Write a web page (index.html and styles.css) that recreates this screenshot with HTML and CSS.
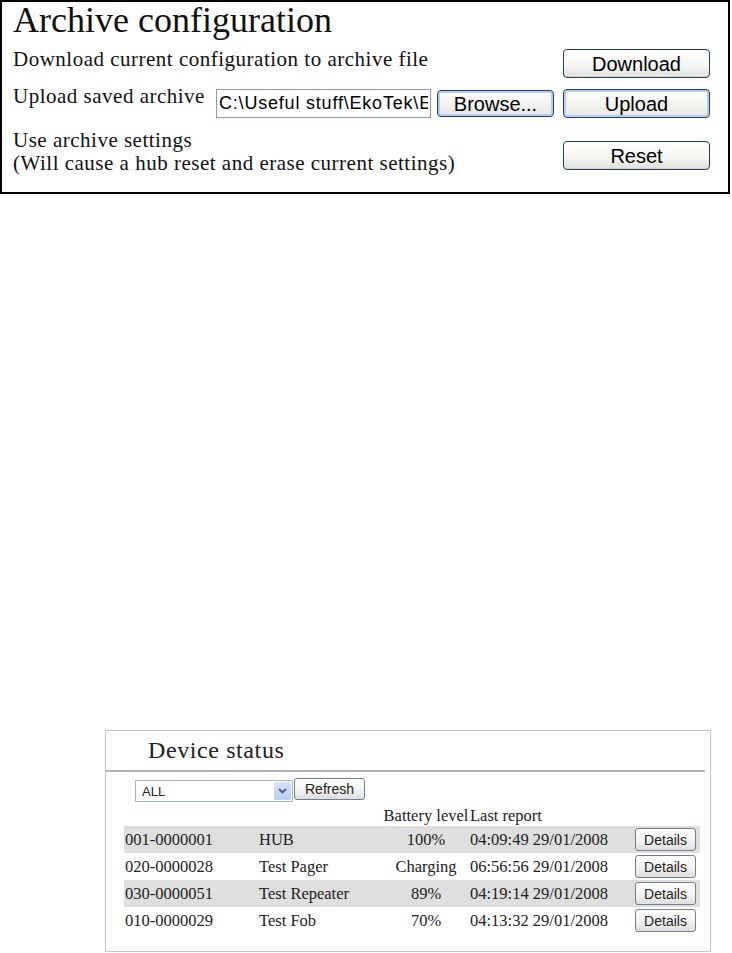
FILE: index.html
```html
<!DOCTYPE html>
<html lang="en">
<head>
<meta charset="utf-8">
<title>Archive configuration</title>
<link rel="stylesheet" href="styles.css">
</head>
<body>
<div class="archive">
  <h1 class="archive-title">Archive configuration</h1>
  <div class="arow arow-download">
    <span class="label">Download current configuration to archive file</span>
    <button class="btn btn-lg">Download</button>
  </div>
  <div class="arow arow-upload">
    <div class="upload-group">
      <span class="label label-upload">Upload saved archive</span>
      <input class="file-path" type="text" value="C:\Useful stuff\EkoTek\EkoTek.cfg">
      <button class="btn btn-browse btn-focus">Browse...</button>
    </div>
    <button class="btn btn-lg btn-focus">Upload</button>
  </div>
  <div class="arow arow-reset">
    <div class="label label-multi">
      <div class="label-line">Use archive settings</div>
      <div class="label-line">(Will cause a hub reset and erase current settings)</div>
    </div>
    <button class="btn btn-lg">Reset</button>
  </div>
</div>

<section class="device-panel">
  <h2 class="device-title">Device status</h2>
  <div class="device-rule"></div>
  <div class="device-controls">
    <div class="select">
      <span class="select-value">ALL</span>
      <span class="select-arrow"><svg width="9" height="6" viewBox="0 0 9 6"><path d="M1 1 L4.5 4.5 L8 1" fill="none" stroke="#3f5b8f" stroke-width="1.8"/></svg></span>
    </div>
    <button class="btn-small btn-refresh">Refresh</button>
  </div>
  <div class="dev-row dev-head"><span></span><span></span><span class="c-batt">Battery level</span><span class="c-time">Last report</span><span></span></div>
  <div class="dev-row shaded"><span class="c-id">001-0000001</span><span>HUB</span><span class="c-batt">100%</span><span class="c-time">04:09:49 29/01/2008</span><span><button class="btn-small btn-details">Details</button></span></div>
  <div class="dev-row"><span class="c-id">020-0000028</span><span>Test Pager</span><span class="c-batt">Charging</span><span class="c-time">06:56:56 29/01/2008</span><span><button class="btn-small btn-details">Details</button></span></div>
  <div class="dev-row shaded"><span class="c-id">030-0000051</span><span>Test Repeater</span><span class="c-batt">89%</span><span class="c-time">04:19:14 29/01/2008</span><span><button class="btn-small btn-details">Details</button></span></div>
  <div class="dev-row"><span class="c-id">010-0000029</span><span>Test Fob</span><span class="c-batt">70%</span><span class="c-time">04:13:32 29/01/2008</span><span><button class="btn-small btn-details">Details</button></span></div>
</section>
</body>
</html>
```
FILE: styles.css
```css
* { box-sizing: border-box; }

body {
  margin: 0;
  background: #fff;
  color: #000;
  font-family: "Liberation Serif", "Times New Roman", serif;
}

/* ---------- Archive configuration ---------- */
.archive {
  width: 730px;
  border: 2px solid #000;
  padding: 0 18px 17px 11px;
}

.archive-title {
  margin: 0;
  font-weight: normal;
  font-size: 36px;
  line-height: 36px;
  color: #111;
}

.arow {
  display: flex;
  justify-content: space-between;
  align-items: flex-start;
}

.label {
  font-size: 21px;
  line-height: 24px;
  letter-spacing: 0.5px;
  white-space: nowrap;
  color: #111;
}

.label-line { line-height: 23px; }

.arow-download { margin-top: 9px; height: 32px; }
.arow-download .btn { margin-top: 2px; }

.arow-upload { margin-top: 5px; height: 34px; }
.upload-group { display: flex; align-items: flex-start; }
.label-upload { width: 203px; }
.file-path {
  margin: 5px 0 0 0;
  width: 215px;
  height: 29px;
  border: 1px solid #7f9db9;
  padding: 0 2px;
  font-family: "Liberation Sans", Arial, sans-serif;
  font-size: 18px;
  letter-spacing: 0.8px;
  color: #000;
  background: #fff;
  outline: none;
}
.btn-browse { margin: 6px 0 0 6px; width: 117px; height: 27px; }
.arow-upload .btn-lg { margin-top: 5px; }

.arow-reset { margin-top: 11px; }
.arow-reset .btn { margin-top: 12px; }

.btn {
  font-family: "Liberation Sans", Arial, sans-serif;
  font-size: 20px;
  line-height: 1;
  color: #000;
  padding: 0;
  border: 1px solid #1f3f6d;
  border-radius: 4px;
  background: linear-gradient(#ffffff, #f6f6f3 55%, #e2e2dc);
  box-shadow: inset 0 -1px 0 #d6d4cc;
}
.btn-lg { width: 147px; height: 29px; }
.btn-focus {
  box-shadow: inset 0 0 0 2px #b6cdf0;
  background: linear-gradient(#ffffff, #f3f3f0 55%, #e4e4df);
}

/* ---------- Device status ---------- */
.device-panel {
  margin: 536px 0 0 105px;
  width: 606px;
  height: 222px;
  border: 1px solid #c6c6c6;
}

.device-title {
  margin: 0;
  padding-left: 42px;
  font-weight: normal;
  font-size: 24px;
  line-height: 39px;
  letter-spacing: 0.6px;
  color: #222;
}

.device-rule {
  height: 2px;
  margin-right: 5px;
  background: #b4b4b4;
}

.device-controls {
  display: flex;
  align-items: flex-start;
  padding-left: 29px;
  height: 30px;
}

.select {
  margin-top: 8px;
  width: 158px;
  height: 22px;
  border: 1px solid #a9b8c9;
  display: flex;
  align-items: center;
  justify-content: space-between;
  background: #fff;
}
.select-value {
  padding-left: 6px;
  font-family: "Liberation Sans", Arial, sans-serif;
  font-size: 13px;
  color: #222;
}
.select-arrow {
  width: 17px;
  height: 18px;
  margin-right: 1px;
  display: flex;
  align-items: center;
  justify-content: center;
  background: linear-gradient(#d7e3fb, #b9cdf3);
  border-radius: 2px;
}

.btn-small {
  font-family: "Liberation Sans", Arial, sans-serif;
  font-size: 14px;
  line-height: 1;
  color: #222;
  padding: 0;
  border: 1px solid #6f7f96;
  border-radius: 3px;
  background: linear-gradient(#ffffff, #f3f3f1 55%, #dedede);
}
.btn-refresh { margin: 6px 0 0 1px; width: 71px; height: 22px; }
.btn-details { width: 61px; height: 23px; display: block; }

.dev-row {
  display: grid;
  grid-template-columns: 135px 124px 86px 166px 65px;
  align-items: center;
  margin-left: 18px;
  width: 576px;
  height: 27px;
  font-size: 16.5px;
  line-height: 27px;
  color: #222;
  white-space: nowrap;
}
.dev-head {
  height: 24px;
  line-height: 21px;
  padding-top: 3px;
  align-items: start;
}
.shaded { background: #dfdfdf; }
.c-id { padding-left: 1px; }
.c-batt { text-align: center; }
.c-time { padding-left: 1px; }
```
